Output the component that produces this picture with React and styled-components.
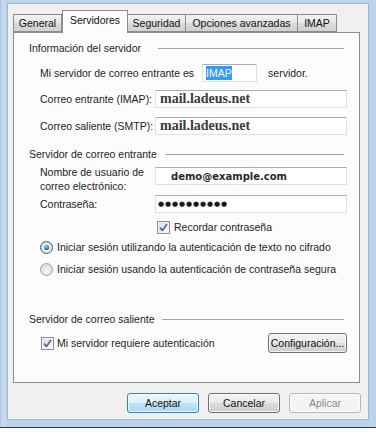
import React from "react";
import styled, { createGlobalStyle } from "styled-components";

const Global = createGlobalStyle`
  html, body { margin: 0; padding: 0; background: #ffffff; }
  body { font-family: "Liberation Sans", Arial, sans-serif; font-size: 10.5px; color: #1c1c1c; }
  * { box-sizing: border-box; }
`;

const Frame = styled.div`
  width: 376px;
  height: 428px;
  padding: 3px 8px 7px 7px;
  background: linear-gradient(90deg, #a9c6e6 0px, #c9dcf0 3px, #bcd3ec 7px, #bcd3ec 100%);
  border-bottom: 1px solid #2e3440;
  display: flex;
`;

const Dialog = styled.div`
  flex: 1;
  background: #f0f0f0;
  border: 1px solid #9fb7d2;
  display: flex;
  flex-direction: column;
  padding: 6px 8px 0 5px;
`;

const TabStrip = styled.div`
  display: flex;
  align-items: flex-end;
  height: 23px;
  margin-bottom: -1px;
  position: relative;
  z-index: 1;
`;

const Tab = styled.div`
  width: ${p => p.$w}px;
  height: ${p => (p.$active ? 23 : 18)}px;
  margin-bottom: ${p => (p.$active ? 0 : 1)}px;
  border: 1px solid #898c95;
  border-bottom: ${p => (p.$active ? "none" : "1px solid #898c95")};
  border-left-width: ${p => (p.$first || p.$active ? 1 : 0)}px;
  background: ${p => (p.$active ? "#fcfcfc" : "linear-gradient(#f2f2f2, #e6e6e6 50%, #dadada 51%, #d2d2d2)")};
  display: flex;
  align-items: center;
  justify-content: center;
  padding-bottom: ${p => (p.$active ? 4 : 0)}px;
  font-size: 10.5px;
  color: #111;
  white-space: nowrap;
`;

const Panel = styled.div`
  height: 351px;
  border: 1px solid #898c95;
  background: #fcfcfc;
  padding: 7px 12px 0 15px;
  display: flex;
  flex-direction: column;
`;

const Heading = styled.div`
  display: flex;
  align-items: center;
  height: 16px;
  margin-top: ${p => p.$mt || 0}px;
  margin-right: 3px;
  white-space: nowrap;
  &::after {
    content: "";
    flex: 1;
    height: 1px;
    margin-left: ${p => p.$gap || 8}px;
    background: #a6a6a6;
  }
`;

const Row = styled.div`
  display: flex;
  align-items: ${p => p.$align || "center"};
  height: ${p => p.$h || 18}px;
  margin-top: ${p => p.$mt || 0}px;
  padding-left: ${p => (p.$indent === undefined ? 11 : p.$indent)}px;
  white-space: nowrap;
`;

const Label = styled.div`
  width: ${p => p.$w || 115}px;
  flex-shrink: 0;
  line-height: 14px;
  padding-top: ${p => p.$pt || 0}px;
  white-space: ${p => (p.$wrap ? "normal" : "nowrap")};
`;

const TextBox = styled.div`
  width: ${p => p.$w || 192}px;
  height: ${p => p.$h || 18}px;
  margin-top: ${p => p.$mt || 0}px;
  margin-left: ${p => p.$ml || 0}px;
  background: #ffffff;
  border: 1px solid #dde2e8;
  border-top-color: #abadb3;
  display: flex;
  align-items: center;
  padding-left: ${p => p.$pl || 4}px;
  flex-shrink: 0;
`;

const ServerText = styled.span`
  font-family: "Liberation Serif", "Times New Roman", serif;
  font-weight: bold;
  font-size: 14px;
  color: #3a3a3a;
`;

const UserText = styled.span`
  font-family: "DejaVu Sans", Verdana, sans-serif;
  font-weight: bold;
  font-size: 10px;
  color: #2a2a2a;
`;

const Dots = styled.span`
  font-family: "DejaVu Sans", sans-serif;
  font-size: 7px;
  letter-spacing: 0.9px;
  color: #1a1a1a;
  line-height: 1;
  margin-top: 1px;
`;

const Selected = styled.span`
  background: #3399ff;
  color: #ffffff;
  padding: 1px 0;
`;

const After = styled.span`
  margin-left: 11px;
`;

const CheckBox = styled.span`
  width: 13px;
  height: 13px;
  flex-shrink: 0;
  border: 1px solid #8e8f8f;
  background: linear-gradient(135deg, #dcdcdc, #fbfbfb);
  box-shadow: inset 0 0 0 1px #f4f4f4;
  display: inline-flex;
  align-items: center;
  justify-content: center;
  margin-left: ${p => p.$ml || 0}px;
  margin-right: ${p => p.$mr || 4}px;
`;

const Radio = styled.span`
  width: 13px;
  height: 13px;
  flex-shrink: 0;
  border-radius: 50%;
  border: 1px solid ${p => (p.$on ? "#2c628b" : "#a2a2a2")};
  background: radial-gradient(circle at 50% 60%, #f6f6f6, #d5d5d5);
  display: inline-flex;
  align-items: center;
  justify-content: center;
  margin-right: 4px;
  &::after {
    content: "";
    width: 5px;
    height: 5px;
    border-radius: 50%;
    background: ${p => (p.$on ? "radial-gradient(circle at 40% 35%, #8fd6ff, #1e5f9c 70%, #0b2f5a)" : "transparent")};
  }
`;

const Spacer = styled.div`
  flex: 1;
`;

const Button = styled.button`
  width: ${p => p.$w || 72}px;
  height: ${p => p.$h || 20}px;
  padding: 0;
  border-radius: 3px;
  font-family: "Liberation Sans", Arial, sans-serif;
  font-size: 10.5px;
  color: ${p => (p.$disabled ? "#8a8a8a" : "#111")};
  border: 1px solid ${p => (p.$default ? "#3c7fb1" : p.$disabled ? "#b5b9bc" : "#707070")};
  background: ${p =>
    p.$default
      ? "linear-gradient(#ebf6fd, #dbf0fb 50%, #bfe4f8 51%, #a9d8f3)"
      : p.$disabled
      ? "#f4f4f4"
      : "linear-gradient(#f3f3f3, #ebebeb 50%, #dddddd 51%, #cfcfcf)"};
  box-shadow: inset 0 0 0 1px rgba(255, 255, 255, 0.75);
  flex-shrink: 0;
`;

const ButtonBar = styled.div`
  display: flex;
  justify-content: flex-end;
  gap: 9px;
  margin-top: 10px;
  margin-right: -1px;
`;

const Check = () => (
  <svg width="9" height="9" viewBox="0 0 9 9">
    <path d="M1 4.6 L3.4 7.4 L8 1" fill="none" stroke="#4a6ba0" strokeWidth="1.7" strokeLinejoin="round" />
  </svg>
);

export default function App() {
  return (
    <>
      <Global />
      <Frame>
        <Dialog>
          <TabStrip>
            <Tab $w={49} $first>General</Tab>
            <Tab $w={66} $active>Servidores</Tab>
            <Tab $w={58}>Seguridad</Tab>
            <Tab $w={112}>Opciones avanzadas</Tab>
            <Tab $w={39}>IMAP</Tab>
          </TabStrip>
          <Panel>
            <Heading $gap={17}>Información del servidor</Heading>
            <Row $mt={8}>
              <span>Mi servidor de correo entrante es</span>
              <TextBox $w={55} $ml={8} $pl={3}>
                <Selected>IMAP</Selected>
              </TextBox>
              <After>servidor.</After>
            </Row>
            <Row $mt={8}>
              <Label>Correo entrante (IMAP):</Label>
              <TextBox>
                <ServerText>mail.ladeus.net</ServerText>
              </TextBox>
            </Row>
            <Row $mt={9}>
              <Label>Correo saliente (SMTP):</Label>
              <TextBox>
                <ServerText>mail.ladeus.net</ServerText>
              </TextBox>
            </Row>
            <Heading $mt={11}>Servidor de correo entrante</Heading>
            <Row $mt={3} $h={28} $align="flex-start">
              <Label $wrap>
                Nombre de usuario de
                <br />
                correo electrónico:
              </Label>
              <TextBox $mt={2} $pl={15}>
                <UserText>demo@example.com</UserText>
              </TextBox>
            </Row>
            <Row $mt={2}>
              <Label>Contraseña:</Label>
              <TextBox $pl={2}>
                <Dots>●●●●●●●●●●</Dots>
              </TextBox>
            </Row>
            <Row $mt={6} $h={16}>
              <CheckBox $ml={117}>
                <Check />
              </CheckBox>
              <span>Recordar contraseña</span>
            </Row>
            <Row $mt={4} $h={16}>
              <Radio $on />
              <span>Iniciar sesión utilizando la autenticación de texto no cifrado</span>
            </Row>
            <Row $mt={6} $h={16}>
              <Radio />
              <span>Iniciar sesión usando la autenticación de contraseña segura</span>
            </Row>
            <Heading $mt={34}>Servidor de correo saliente</Heading>
            <Row $mt={6} $h={20}>
              <CheckBox $ml={1} $mr={3}>
                <Check />
              </CheckBox>
              <span>Mi servidor requiere autenticación</span>
              <Spacer />
              <Button $w={79}>Configuración...</Button>
            </Row>
          </Panel>
          <ButtonBar>
            <Button $default>Aceptar</Button>
            <Button>Cancelar</Button>
            <Button $disabled>Aplicar</Button>
          </ButtonBar>
        </Dialog>
      </Frame>
    </>
  );
}
